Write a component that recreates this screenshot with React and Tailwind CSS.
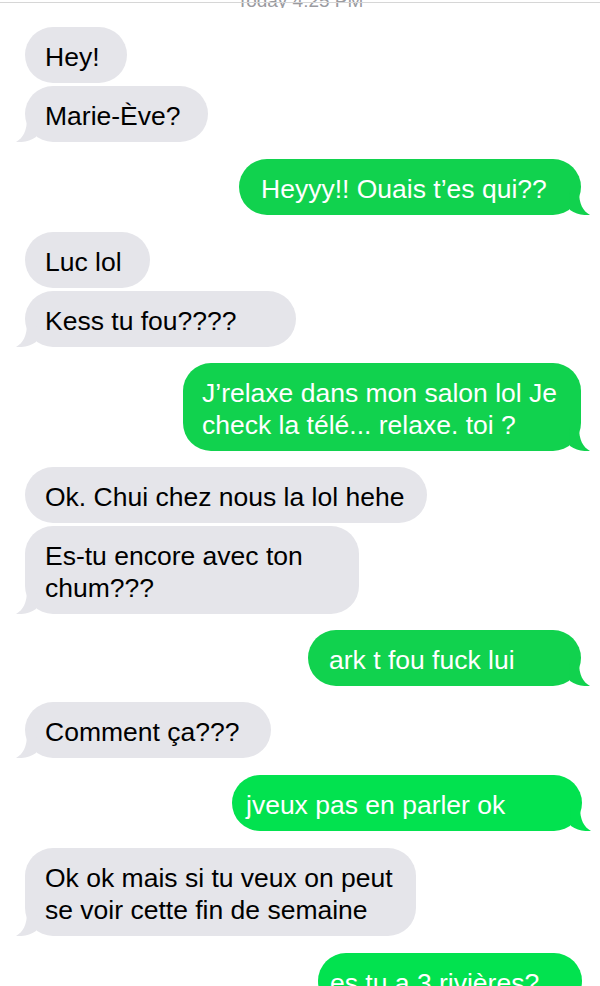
import React from "react";

const messages = [
    { from: "them", lines: ["Hey!"], w: "w-[102px]", mt: "mt-[19px]" },
    { from: "them", lines: ["Marie-Ève?"], w: "w-[183px]", mt: "mt-[3px]", tail: true },
    { from: "me", lines: ["Heyyy!! Ouais t’es qui??"], w: "w-[342px]", mt: "mt-[17px]", pl: "pl-[22px]", tail: true },
    { from: "them", lines: ["Luc lol"], w: "w-[125px]", mt: "mt-[17px]" },
    { from: "them", lines: ["Kess tu fou????"], w: "w-[271px]", mt: "mt-[3px]", tail: true },
    { from: "me", lines: ["J’relaxe dans mon salon lol Je", "check la télé... relaxe. toi ?"], w: "w-[398px]", mt: "mt-[16px]", pl: "pl-[19px]", tail: true },
    { from: "them", lines: ["Ok. Chui chez nous la lol hehe"], w: "w-[402px]", mt: "mt-[16px]" },
    { from: "them", lines: ["Es-tu encore avec ton", "chum???"], w: "w-[334px]", mt: "mt-[3px]", tail: true },
    { from: "me", lines: ["ark t fou fuck lui"], w: "w-[273px]", mt: "mt-[16px]", pl: "pl-[21px]", tail: true },
    { from: "them", lines: ["Comment ça???"], w: "w-[246px]", mt: "mt-[16px]", tail: true },
    { from: "me", lines: ["jveux pas en parler ok"], w: "w-[350px]", mt: "mt-[17px]", pl: "pl-[14px]", tail: true, bright: true },
    { from: "them", lines: ["Ok ok mais si tu veux on peut", "se voir cette fin de semaine"], w: "w-[391px]", mt: "mt-[17px]", tail: true },
    { from: "me", lines: ["es tu a 3 rivières?"], w: "w-[264px]", mt: "mt-[17px]", pl: "pl-[12px]", tail: true, bright: true },
];

const Tail = ({ side, color }) =>
    side === "them" ? (
        <svg className="absolute -left-[10px] bottom-0" width="22" height="24" viewBox="0 0 22 24">
            <path d="M12 0 C12 13 8 20 1 24 C9 24.5 15 23 21 19 L22 0 Z" fill={color} />
        </svg>
    ) : (
        <svg className="absolute -right-[10px] bottom-0" width="22" height="24" viewBox="0 0 22 24">
            <path d="M10 0 C10 13 14 20 21 24 C13 24.5 7 23 1 19 L0 0 Z" fill={color} />
        </svg>
    );

const Bubble = ({ m }) => {
    const mine = m.from === "me";
    const color = mine ? (m.bright ? "#02e24f" : "#11d24e") : "#e5e5ea";
    return (
        <div className={`flex ${mine ? "justify-end" : "justify-start"} ${m.mt}`}>
            <div
                className={`relative ${m.w} rounded-[28px] pt-[14px] pb-[10px] text-[26.5px] leading-8 whitespace-nowrap ${
                    mine
                        ? `${m.pl} ${m.bright ? "bg-[#02e24f]" : "bg-[#11d24e]"} text-white`
                        : "pl-5 bg-[#e5e5ea] text-black"
                }`}
            >
                {m.tail && <Tail side={m.from} color={color} />}
                <div className="relative">
                    {m.lines.map((l, i) => (
                        <div key={i}>{l}</div>
                    ))}
                </div>
            </div>
        </div>
    );
};

export default function App() {
    return (
        <div className="w-[600px] h-[986px] overflow-hidden bg-white font-['Liberation_Sans',Arial,sans-serif]">
            {/* cut-off timestamp at the very top */}
            <div className="relative h-[8px] overflow-hidden">
                <div className="-mt-[9px] text-center text-[19px] leading-[19px] text-[#9a9a9f]">Today 4:25 PM</div>
                <div className="absolute left-0 right-0 top-[2px] h-px bg-[#d6d6d6]" />
            </div>

            <div className="pl-[25px] pr-[19px]">
                {messages.slice(0, 10).map((m, i) => (
                    <Bubble key={i} m={m} />
                ))}
            </div>
            <div className="pl-[25px] pr-[18px]">
                {messages.slice(10).map((m, i) => (
                    <Bubble key={i} m={m} />
                ))}
            </div>
        </div>
    );
}
